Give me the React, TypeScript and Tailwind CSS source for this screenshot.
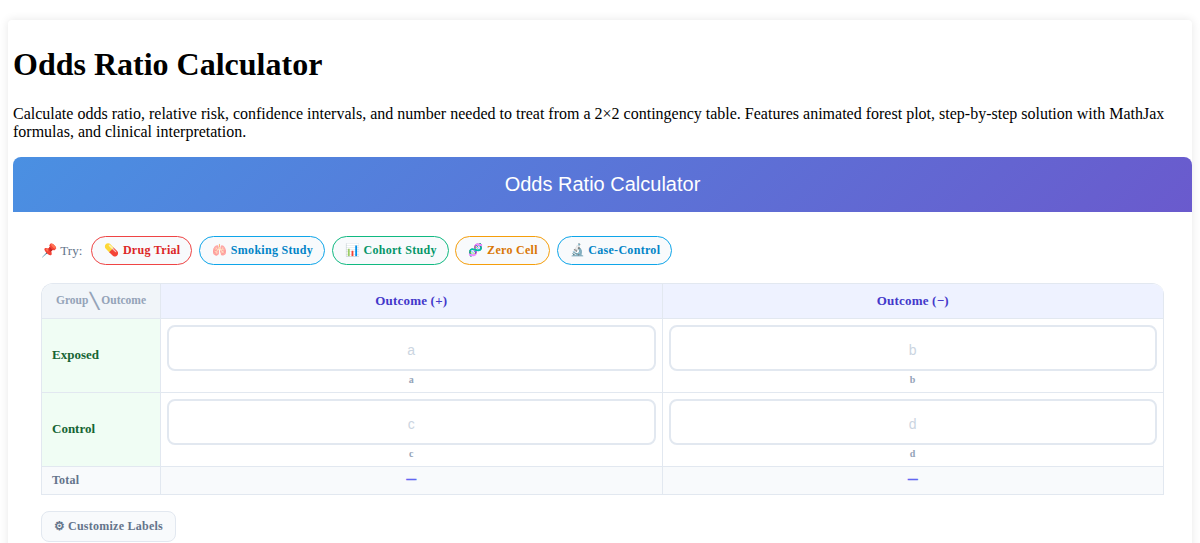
const serif = "font-['Liberation_Serif',serif]";

const chips = [
  { label: "💊 Drug Trial", cls: "border-[#ef4444] text-[#dc2626]" },
  { label: "🫁 Smoking Study", cls: "border-[#0ea5e9] text-[#0284c7]" },
  { label: "📊 Cohort Study", cls: "border-[#10b981] text-[#059669]" },
  { label: "🧬 Zero Cell", cls: "border-[#f59e0b] text-[#d97706]" },
  { label: "🔬 Case-Control", cls: "border-[#0ea5e9] text-[#0284c7]" },
];

function InputCell({ name }: { name: string }) {
  return (
    <div className="flex flex-col items-center border-r border-b border-[#e2e8f0] px-1.5 pt-1.5">
      <input
        placeholder={name}
        className="h-[46px] w-full rounded-lg border-2 border-[#e2e8f0] bg-white pt-[3px] text-center font-['Liberation_Sans',sans-serif] text-sm text-[#334155] outline-none placeholder:text-[#cbd5e1]"
      />
      <span className="mt-[3px] text-[10px] leading-[11px] font-bold tracking-[0.2px] text-[#94a3b8]">{name}</span>
    </div>
  );
}

function RowHead({ label }: { label: string }) {
  return (
    <div className="flex items-center border-r border-b border-[#e2e8f0] bg-[#f0fdf4] pb-px pl-2.5 text-[13px] font-bold text-[#166534]">
      {label}
    </div>
  );
}

function TotalCell() {
  return (
    <div className="flex items-center justify-center border-r border-b border-[#e2e8f0] bg-[#f8fafc] pb-[5px] text-xl leading-none font-bold text-[#6366f1]">
      –
    </div>
  );
}

export default function App() {
  return (
    <div className={`h-[543px] overflow-hidden bg-white pt-5 pr-2 pl-2 text-black ${serif}`}>
      <div className="h-[600px] rounded-sm bg-white pl-[5px] shadow-[0_0_10px_rgba(0,0,0,0.1)]">
        <h1 className="pt-[26px] text-[32px] leading-[37px] font-bold">Odds Ratio Calculator</h1>
        <p className="mt-[22px] pr-5 text-base leading-[18px]">
          Calculate odds ratio, relative risk, confidence intervals, and number needed to treat from a 2×2 contingency table. Features animated forest plot, step-by-step solution with MathJax formulas, and clinical interpretation.
        </p>
        <div className="mt-4 flex h-[55px] items-center justify-center rounded-t-lg bg-[linear-gradient(135deg,#4a90e2_0%,#6a5acd_100%)] pb-0.5 font-['Liberation_Sans',sans-serif] text-xl text-white">
          Odds Ratio Calculator
        </div>
        <div className="pt-6 pr-7 pl-7">
          <div className="flex items-center gap-[6.75px]">
            <span className="mr-[2px] text-[13px] tracking-[0.1px] text-[#64748b]">📌 Try:</span>
            {chips.map((c) => (
              <button key={c.label} className={`flex h-[29px] items-center rounded-[20px] border bg-[#f8fafc] pt-0 pr-[11px] pb-px pl-3 text-xs font-bold tracking-[0.3px] ${c.cls}`}>
                {c.label}
              </button>
            ))}
          </div>
          <div className="mt-[18px] grid grid-cols-[119px_1fr_1fr] grid-rows-[35px_74px_74px_28px] overflow-hidden rounded-t-xl border-t border-l border-[#e2e8f0]">
            <div className="flex items-center justify-center border-r border-b border-[#e2e8f0] bg-[#f1f5f9] text-[11.5px] font-bold text-[#94a3b8]">
              Group <span className="mx-0.5 text-[15px] leading-none font-bold">╲</span> Outcome
            </div>
            <div className="flex items-center justify-center border-r border-b border-[#e2e8f0] bg-[#eef2ff] text-[13px] font-bold tracking-[0.2px] text-[#4338ca]">Outcome (+)</div>
            <div className="flex items-center justify-center border-r border-b border-[#e2e8f0] bg-[#eef2ff] text-[13px] font-bold tracking-[0.2px] text-[#4338ca]">Outcome (−)</div>
            <RowHead label="Exposed" />
            <InputCell name="a" />
            <InputCell name="b" />
            <RowHead label="Control" />
            <InputCell name="c" />
            <InputCell name="d" />
            <div className="flex items-center border-r border-b border-[#e2e8f0] bg-[#f8fafc] pb-0.5 pl-2.5 text-xs font-bold tracking-[0.2px] text-[#64748b]">Total</div>
            <TotalCell />
            <TotalCell />
          </div>
          <button className="mt-4 h-[31px] rounded-lg border border-[#e2e8f0] bg-[#f8fafc] px-[11.5px] pb-0.5 text-xs font-bold tracking-[0.25px] text-[#64748b]">
            ⚙ Customize Labels
          </button>
        </div>
      </div>
    </div>
  );
}
